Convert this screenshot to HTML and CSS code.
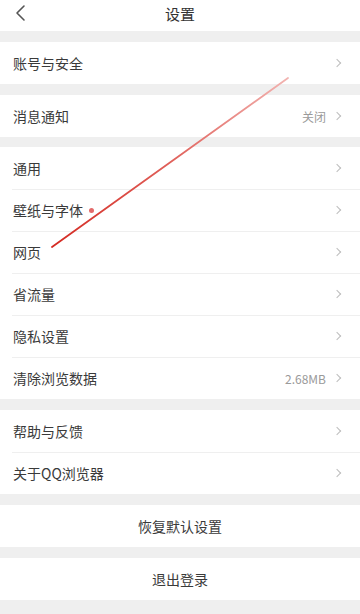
FILE: index.html
```html
<!DOCTYPE html>
<html lang="zh-CN">
<head>
<meta charset="utf-8">
<title>设置</title>
<link rel="stylesheet" href="styles.css">
</head>
<body>
<div class="page">
  <header class="header">
    <svg class="back" width="14" height="18" viewBox="0 0 14 18"><path d="M11 2 L4 9 L11 16" fill="none" stroke="#555" stroke-width="1.6" stroke-linecap="round" stroke-linejoin="round"/></svg>
    <div class="title">设置</div>
  </header>
  <div class="band"></div>
  <div class="group">
    <div class="row"><span class="label">账号与安全</span><span class="right"><span class="chev"></span></span></div>
  </div>
  <div class="band"></div>
  <div class="group">
    <div class="row"><span class="label">消息通知</span><span class="right"><span class="value">关闭</span><span class="chev"></span></span></div>
  </div>
  <div class="band band-s"></div>
  <div class="group">
    <div class="row"><span class="label">通用</span><span class="right"><span class="chev"></span></span></div>
    <div class="row"><span class="label">壁纸与字体<span class="dot"></span></span><span class="right"><span class="chev"></span></span></div>
    <div class="row"><span class="label">网页</span><span class="right"><span class="chev"></span></span></div>
    <div class="row"><span class="label">省流量</span><span class="right"><span class="chev"></span></span></div>
    <div class="row"><span class="label">隐私设置</span><span class="right"><span class="chev"></span></span></div>
    <div class="row"><span class="label">清除浏览数据</span><span class="right"><span class="value">2.68MB</span><span class="chev"></span></span></div>
  </div>
  <div class="band"></div>
  <div class="group">
    <div class="row"><span class="label">帮助与反馈</span><span class="right"><span class="chev"></span></span></div>
    <div class="row"><span class="label">关于QQ浏览器</span><span class="right"><span class="chev"></span></span></div>
  </div>
  <div class="band"></div>
  <div class="group">
    <div class="row center"><span class="label">恢复默认设置</span></div>
  </div>
  <div class="band"></div>
  <div class="group">
    <div class="row center"><span class="label">退出登录</span></div>
  </div>
  <div class="band rest"></div>

  <svg class="arrow" width="360" height="614" viewBox="0 0 360 614">
    <defs>
      <linearGradient id="g" x1="288" y1="78" x2="52" y2="247" gradientUnits="userSpaceOnUse">
        <stop offset="0" stop-color="#f2b3b0"/>
        <stop offset="0.5" stop-color="#e0605a"/>
        <stop offset="1" stop-color="#d42a22"/>
      </linearGradient>
    </defs>
    <line x1="288" y1="78" x2="52" y2="247" stroke="url(#g)" stroke-width="1.8" stroke-linecap="round"/>
  </svg>
</div>
</body>
</html>
```
FILE: styles.css
```css
* { box-sizing: border-box; }
html, body { margin: 0; padding: 0; background: #f0f0f0; }
body {
  font-family: "Noto Sans CJK SC", "Noto Sans", sans-serif;
  color: #333;
}
.page {
  position: relative;
  width: 360px;
  height: 614px;
  overflow: hidden;
  background: #f0f0f0;
  display: flex;
  flex-direction: column;
}
.header {
  height: 31px;
  background: #fff;
  display: flex;
  align-items: center;
  justify-content: center;
  position: relative;
  flex: none;
}
.back {
  position: absolute;
  left: 13px;
  top: 4px;
}
.title {
  font-size: 15px;
  color: #333;
  line-height: 1;
  margin-top: -4px;
}
.band { height: 11px; flex: none; background: #efefef; }
.band-s { height: 10px; }
.rest { flex: 1; }
.group { background: #fff; flex: none; }
.row {
  height: 42px;
  display: flex;
  align-items: center;
  justify-content: space-between;
  padding: 0 19px 0 13px;
  position: relative;
}
.row + .row::before {
  content: "";
  position: absolute;
  left: 12px;
  right: 0;
  top: 0;
  height: 1px;
  background: #efefef;
}
.label {
  font-size: 14px;
  color: #3a3a3a;
  display: flex;
  align-items: center;
}
.row.center { justify-content: center; padding: 0; }
.row.center .label { font-size: 14px; color: #3a3a3a; }
.right {
  display: flex;
  align-items: center;
  gap: 8px;
}
.value {
  font-size: 12px;
  color: #9a9a9a;
}
.chev {
  width: 6px;
  height: 6px;
  border-top: 1.2px solid #bdbdbd;
  border-right: 1.2px solid #bdbdbd;
  transform: rotate(45deg);
  margin-right: 1px;
}
.dot {
  width: 5px;
  height: 5px;
  border-radius: 50%;
  background: #e36a6a;
  margin-left: 6px;
}
.arrow {
  position: absolute;
  left: 0;
  top: 0;
  pointer-events: none;
}
```
